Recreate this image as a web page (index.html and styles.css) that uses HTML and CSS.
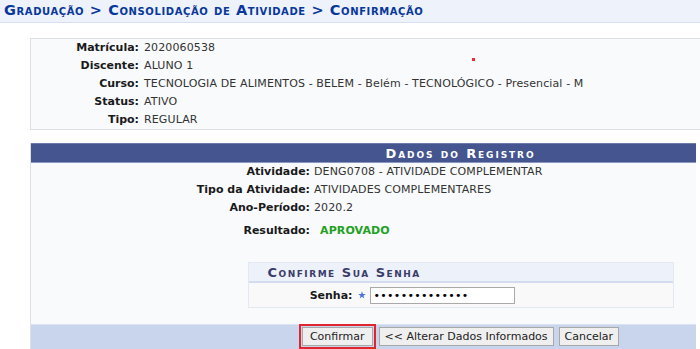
FILE: index.html
```html
<!DOCTYPE html>
<html lang="pt-BR">
<head>
    <meta charset="utf-8">
    <title>Consolidação de Atividade - Confirmação</title>
    <link rel="stylesheet" href="styles.css">
</head>
<body>
    <h2 class="titulo">Graduação &gt; Consolidação de Atividade &gt; Confirmação</h2>

    <div class="ficha">
        <span class="marca"></span>
        <div class="linha"><span class="rot">Matrícula:</span><span>2020060538</span></div>
        <div class="linha"><span class="rot">Discente:</span><span>ALUNO 1</span></div>
        <div class="linha"><span class="rot">Curso:</span><span>TECNOLOGIA DE ALIMENTOS - BELEM - Belém - TECNOLÓGICO - Presencial - M</span></div>
        <div class="linha"><span class="rot">Status:</span><span>ATIVO</span></div>
        <div class="linha"><span class="rot">Tipo:</span><span>REGULAR</span></div>
    </div>

    <div class="recorte">
        <form class="registro" onsubmit="return false">
            <div class="cab">Dados do Registro</div>
            <div class="campos">
                <div class="linha"><span class="rot">Atividade:</span><span>DENG0708 - ATIVIDADE COMPLEMENTAR</span></div>
                <div class="linha"><span class="rot">Tipo da Atividade:</span><span>ATIVIDADES COMPLEMENTARES</span></div>
                <div class="linha"><span class="rot">Ano-Período:</span><span>2020.2</span></div>
                <div class="linha resultado"><span class="rot">Resultado:</span><span class="aprovado">APROVADO</span></div>
            </div>

            <div class="senha">
                <div class="senha-cab">Confirme Sua Senha</div>
                <div class="senha-linha">
                    <label class="rot" for="senha">Senha:</label>
                    <svg class="obrig" width="8" height="8" viewBox="0 0 10 10"><path d="M5 0.3 L6.2 3.6 L9.7 3.7 L6.9 5.8 L7.9 9.3 L5 7.2 L2.1 9.3 L3.1 5.8 L0.3 3.7 L3.8 3.6 Z" fill="#4d74d6"/></svg>
                    <input id="senha" type="password" value="abcdefghijklmn">
                </div>
            </div>

            <div class="botoes">
                <button class="destaque">Confirmar</button>
                <button>&lt;&lt; Alterar Dados Informados</button>
                <button>Cancelar</button>
            </div>
        </form>
    </div>
</body>
</html>
```

FILE: styles.css
```css
* { box-sizing: border-box }
html, body { margin: 0; padding: 0; background: #fff; overflow: hidden }
body { font-family: "DejaVu Sans", Verdana, sans-serif; font-size: 11px; color: #222; width: 700px; height: 349px }

/* titulo da pagina */
.titulo { margin: 0; height: 23px; padding: 2px 0 0 4px; background: #eef2fa; border-bottom: 1px solid #d6e0f2;
    font-variant: small-caps; font-weight: bold; font-size: 14.5px; letter-spacing: 0.6px; color: #08389a }

/* dados do discente */
.ficha { position: relative; margin: 15px 0 0 30px; width: 860px; background: #f9fafc; border: 1px solid #dfe0e4 }
.ficha .linha { display: grid; grid-template-columns: 108px 1fr; column-gap: 5px; line-height: 18px }
.rot { font-weight: bold; text-align: right; color: #1a1a1a }
.linha span + span { color: #333; letter-spacing: 0.12px }
.marca { position: absolute; left: 441px; top: 19px; width: 3px; height: 3px; background: #f0283a }

/* registro */
.recorte { margin: 13px 0 0 30px; width: 666px; height: 220px; overflow: hidden }
.registro { width: 860px; background: #f9fafc; border-left: 1px solid #dfe0e4 }
.cab { height: 20px; line-height: 19px; text-align: center; color: #fff; background: #44558f;
    border-top: 1px solid #6d7cad; border-bottom: 1px solid #8a97c2;
    font-variant: small-caps; font-weight: bold; letter-spacing: 1.9px; font-size: 13px }
.campos .linha { display: grid; grid-template-columns: 279px 1fr; column-gap: 4px; line-height: 18px }
.campos .resultado { margin-top: 5px }
.aprovado { padding-left: 6px; font-weight: bold; color: #22a022 !important }

/* confirmacao da senha */
.senha { width: 426px; margin: 22px auto 0; border: 1px solid #e3e8f3 }
.senha-cab { height: 20px; line-height: 20px; padding-left: 19px; background: #edf1f9; border-bottom: 2px solid #d4ddef;
    font-variant: small-caps; font-weight: bold; font-size: 13px; letter-spacing: 1.5px; color: #3a3c6a }
.senha-linha { display: flex; align-items: center; height: 24px; background: #f9f9f9 }
.senha-linha .rot { width: 104px; margin-right: 5px }
.obrig { margin-right: 4px }
.senha-linha input { width: 145px; height: 17px; padding: 0 3px; border: 1px solid #a9a9a9; background: #fff;
    font-family: "DejaVu Sans", sans-serif; font-size: 11px; letter-spacing: 0.3px }

/* botoes */
.botoes { display: flex; justify-content: center; gap: 5px; margin-top: 16px; height: 30px; padding-top: 2px; background: #c9d5ec;
    border-top: 1px solid #dbe3f3 }
.botoes button { height: 19px; padding: 0 5px; font-family: "DejaVu Sans", Verdana, sans-serif; font-size: 11px; color: #222;
    background: #efefef; border: 1px solid #a8a8a8; border-radius: 0 }
.botoes .destaque { padding: 0 7px; outline: 2px solid #e0252e; outline-offset: 1px; margin-right: 1px }
```
